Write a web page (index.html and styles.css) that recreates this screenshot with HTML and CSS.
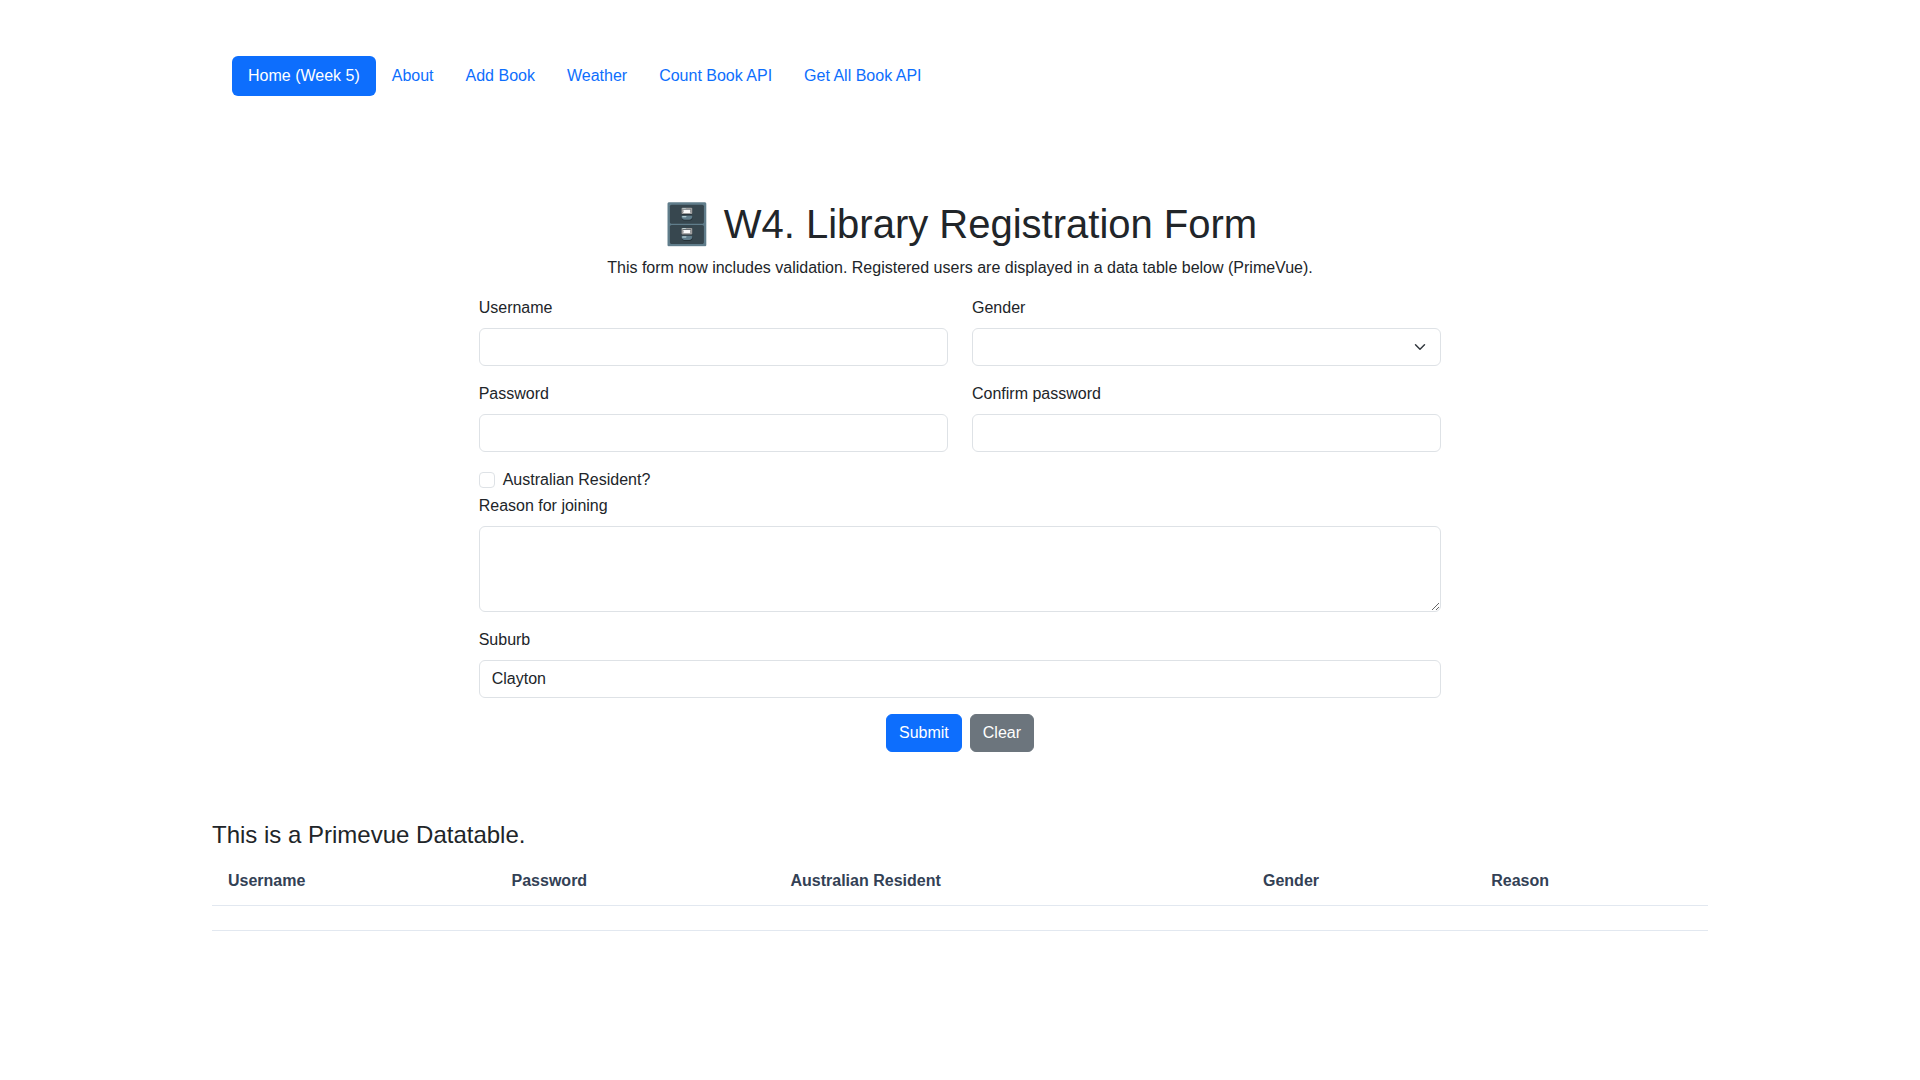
FILE: index.html
```html
<!DOCTYPE html>
<html lang="en">
  <head>
    <meta charset="UTF-8" />
    <meta name="viewport" content="width=device-width, initial-scale=1.0" />
    <title>Library Registration Form</title>
    <link rel="stylesheet" href="styles.css">
  </head>

  <body>
    <div class="app">
      <header class="header">
        <nav>
          <ul class="nav">
            <li><a href="#" class="nav-link active" aria-current="page">Home (Week 5)</a></li>
            <li><a href="#about" class="nav-link">About</a></li>
            <li><a href="#addbook" class="nav-link">Add Book</a></li>
            <li><a href="#weather" class="nav-link">Weather</a></li>
            <li><a href="#count" class="nav-link">Count Book API</a></li>
            <li><a href="#books" class="nav-link">Get All Book API</a></li>
          </ul>
        </nav>
      </header>

      <main>
        <div class="form-wrapper">
          <div class="form-column">
            <h1>🗄️ W4. Library Registration Form</h1>
            <p class="intro">
              This form now includes validation. Registered users are displayed in a
              data table below (PrimeVue).
            </p>
            <form id="registerForm">
              <div class="row">
                <div class="form-group">
                  <label for="username">Username</label>
                  <input type="text" class="form-control" id="username" />
                </div>
                <div class="form-group">
                  <label for="gender">Gender</label>
                  <select class="form-control form-select" id="gender">
                    <option value="" selected></option>
                    <option value="female">Female</option>
                    <option value="male">Male</option>
                    <option value="other">Other</option>
                  </select>
                </div>
              </div>
              <div class="row">
                <div class="form-group">
                  <label for="password">Password</label>
                  <input type="password" class="form-control" id="password" />
                </div>
                <div class="form-group">
                  <label for="confirm-password">Confirm password</label>
                  <input type="password" class="form-control" id="confirm-password" />
                </div>
              </div>
              <div class="form-check">
                <input type="checkbox" class="form-check-input" id="isAustralian" />
                <label for="isAustralian">Australian Resident?</label>
              </div>
              <div class="form-group">
                <label for="reason">Reason for joining</label>
                <textarea class="form-control" id="reason" rows="3"></textarea>
              </div>
              <div class="form-group">
                <label for="suburb">Suburb</label>
                <input type="text" class="form-control" id="suburb" value="Clayton" />
              </div>
              <div class="buttons">
                <button type="submit" class="btn btn-primary">Submit</button>
                <button type="reset" class="btn btn-secondary">Clear</button>
              </div>
            </form>
          </div>
        </div>

        <section class="users">
          <h4>This is a Primevue Datatable.</h4>
          <table class="datatable">
            <thead>
              <tr>
                <th>Username</th>
                <th>Password</th>
                <th>Australian Resident</th>
                <th>Gender</th>
                <th>Reason</th>
              </tr>
            </thead>
            <tbody>
              <tr>
                <td colspan="5"></td>
              </tr>
            </tbody>
          </table>
        </section>
      </main>
    </div>
  </body>
</html>
```
FILE: styles.css
```css
*,
*::before,
*::after {
  box-sizing: border-box;
}

body {
  margin: 0;
  background-color: #fff;
  color: #212529;
  font-family: "Liberation Sans", Arial, "Noto Color Emoji", sans-serif;
  font-size: 16px;
  line-height: 24px;
}

.app {
  max-width: 1560px;
  margin: 0 auto;
  padding: 32px;
}

/* navigation */
.header {
  padding: 24px 20px;
}

.nav {
  display: flex;
  flex-wrap: wrap;
  margin: 0;
  padding: 0;
  list-style: none;
}

.nav-link {
  display: block;
  padding: 8px 16px;
  border-radius: 6px;
  color: #0d6efd;
  text-decoration: none;
}

.nav-link.active {
  background-color: #0d6efd;
  color: #fff;
}

/* registration form */
.form-wrapper {
  margin-top: 80px;
  padding: 0 8px;
}

.form-column {
  width: calc(100% * 2 / 3);
  margin: 0 auto;
  padding: 0 12px;
}

h1 {
  margin: 0 0 8px;
  font-size: 40px;
  font-weight: 500;
  line-height: 48px;
  text-align: center;
}

.intro {
  margin: 0 0 16px;
  text-align: center;
}

.row {
  display: grid;
  grid-template-columns: 1fr 1fr;
  gap: 24px;
}

.form-group {
  margin-bottom: 16px;
}

.form-group label {
  display: block;
  margin-bottom: 8px;
}

.form-control {
  display: block;
  width: 100%;
  padding: 6px 12px;
  border: 1px solid #dee2e6;
  border-radius: 6px;
  background-color: #fff;
  color: #212529;
  font: inherit;
  appearance: none;
}

input.form-control,
.form-select {
  height: 38px;
}

textarea.form-control {
  resize: vertical;
}

.form-select {
  padding-right: 36px;
  background-image: url("data:image/svg+xml,%3csvg xmlns='http://www.w3.org/2000/svg' viewBox='0 0 16 16'%3e%3cpath fill='none' stroke='%23343a40' stroke-linecap='round' stroke-linejoin='round' stroke-width='2' d='m2 5 6 6 6-6'/%3e%3c/svg%3e");
  background-repeat: no-repeat;
  background-position: right 12px center;
  background-size: 16px 12px;
}

.form-control:focus {
  border-color: #86b7fe;
  outline: none;
  box-shadow: 0 0 0 4px rgba(13, 110, 253, 0.25);
}

.form-check {
  display: flex;
  align-items: center;
  gap: 8px;
  margin-bottom: 2px;
}

.form-check-input {
  width: 16px;
  height: 16px;
  margin: 0;
  border: 1px solid #dee2e6;
  border-radius: 4px;
  background-color: #fff;
  appearance: none;
}

.form-check-input:checked {
  border-color: #0d6efd;
  background-color: #0d6efd;
}

.buttons {
  display: flex;
  justify-content: center;
  gap: 8px;
}

.btn {
  padding: 6px 12px;
  border: 1px solid transparent;
  border-radius: 6px;
  color: #fff;
  font: inherit;
  cursor: pointer;
}

.btn-primary {
  border-color: #0d6efd;
  background-color: #0d6efd;
}

.btn-secondary {
  border-color: #6c757d;
  background-color: #6c757d;
}

/* registered users */
.users {
  margin-top: 68px;
}

h4 {
  margin: 0 0 8px;
  font-size: 24px;
  font-weight: 500;
  line-height: 29px;
}

.datatable {
  width: 100%;
  border-collapse: separate;
  border-spacing: 0;
}

.datatable th,
.datatable td {
  padding: 12px 16px;
  border-bottom: 1px solid #e2e8f0;
  color: #334155;
  text-align: left;
}

.datatable th {
  font-weight: 600;
}
```
